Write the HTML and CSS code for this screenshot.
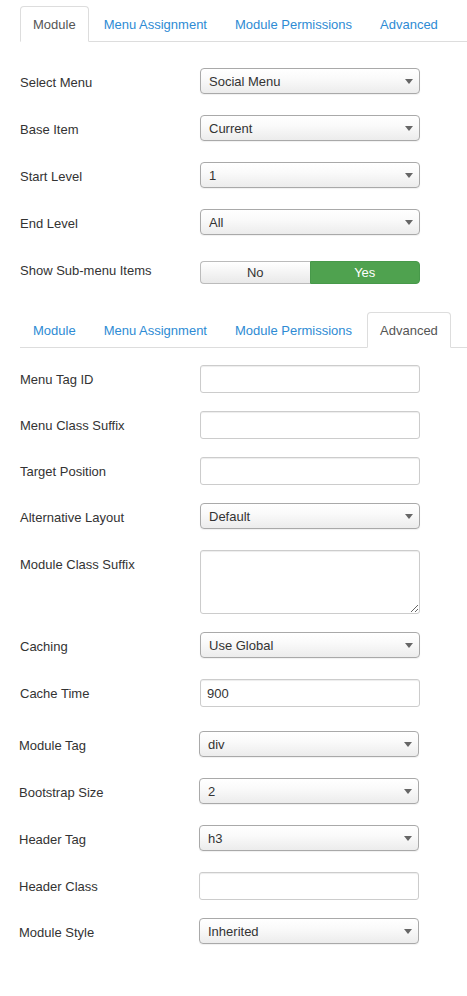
FILE: index.html
```html
<!DOCTYPE html>
<html>
<head>
<meta charset="utf-8">
<link rel="stylesheet" href="styles.css">
</head>
<body>
<div class="page">
  <ul class="tabs tabs-first">
    <li class="tab active"><a>Module</a></li>
    <li class="tab"><a>Menu Assignment</a></li>
    <li class="tab"><a>Module Permissions</a></li>
    <li class="tab"><a>Advanced</a></li>
  </ul>
  <div class="pane pane-first">
    <div class="row"><label class="lbl">Select Menu</label><div class="select"><select><option>Social Menu</option></select></div></div>
    <div class="row"><label class="lbl">Base Item</label><div class="select"><select><option>Current</option></select></div></div>
    <div class="row"><label class="lbl">Start Level</label><div class="select"><select><option>1</option></select></div></div>
    <div class="row"><label class="lbl">End Level</label><div class="select"><select><option>All</option></select></div></div>
    <div class="row"><label class="lbl">Show Sub-menu Items</label>
      <div class="toggle"><span class="tbtn no">No</span><span class="tbtn yes">Yes</span></div>
    </div>
  </div>

  <ul class="tabs tabs-second">
    <li class="tab"><a>Module</a></li>
    <li class="tab"><a>Menu Assignment</a></li>
    <li class="tab"><a>Module Permissions</a></li>
    <li class="tab active"><a>Advanced</a></li>
  </ul>
  <div class="pane pane-second">
    <div class="row"><label class="lbl">Menu Tag ID</label><input class="text" type="text" value=""></div>
    <div class="row"><label class="lbl">Menu Class Suffix</label><input class="text" type="text" value=""></div>
    <div class="row"><label class="lbl">Target Position</label><input class="text" type="text" value=""></div>
    <div class="row"><label class="lbl">Alternative Layout</label><div class="select"><select><option>Default</option></select></div></div>
    <div class="row"><label class="lbl">Module Class Suffix</label><textarea class="area"></textarea></div>
    <div class="row"><label class="lbl">Caching</label><div class="select"><select><option>Use Global</option></select></div></div>
    <div class="row"><label class="lbl">Cache Time</label><input class="text" type="text" value="900"></div>
    <div class="group">
      <div class="row"><label class="lbl">Module Tag</label><div class="select"><select><option>div</option></select></div></div>
      <div class="row"><label class="lbl">Bootstrap Size</label><div class="select"><select><option>2</option></select></div></div>
      <div class="row"><label class="lbl">Header Tag</label><div class="select"><select><option>h3</option></select></div></div>
      <div class="row"><label class="lbl">Header Class</label><input class="text" type="text" value=""></div>
      <div class="row"><label class="lbl">Module Style</label><div class="select"><select><option>Inherited</option></select></div></div>
    </div>
  </div>
</div>
</body>
</html>
```

FILE: styles.css
```css
* { box-sizing: border-box; }
html, body { margin: 0; padding: 0; background: #fff; }
body {
  font-family: "Liberation Sans", Arial, sans-serif;
  font-size: 13px;
  line-height: 18px;
  color: #333;
}
.page { padding-left: 20px; }

.tabs {
  list-style: none;
  margin: 0;
  padding: 0;
  display: flex;
  border-bottom: 1px solid #ddd;
}
.tabs-first { padding-top: 6px; }
.tabs-second { margin-top: 28px; }
.tab { margin-right: 2px; margin-bottom: -1px; }
.tab a {
  display: block;
  padding: 9px 12px 7px;
  line-height: 18px;
  border: 1px solid transparent;
  border-radius: 4px 4px 0 0;
  color: #2e8bd4;
}
.tab.active a {
  color: #555;
  background: #fff;
  border-color: #ddd #ddd transparent #ddd;
}

.pane-first { padding-top: 26px; }
.pane-second { padding-top: 17px; }

.row {
  display: flex;
  align-items: flex-start;
  margin-bottom: 18px;
}
.lbl {
  width: 180px;
  flex: none;
  padding-top: 6px;
  color: #333;
}
.group { padding-top: 6px; margin-left: -1px; }

.select {
  position: relative;
  width: 220px;
  height: 26px;
  margin-bottom: 3px;
}
.select select {
  appearance: none;
  -webkit-appearance: none;
  width: 100%;
  height: 26px;
  margin: 0;
  padding: 0 24px 0 8px;
  font-family: "Liberation Sans", Arial, sans-serif;
  font-size: 13px;
  color: #333;
  border: 1px solid #a9a9a9;
  border-radius: 4px;
  background: linear-gradient(#ffffff 0%, #fafafa 40%, #ececec 100%);
  box-shadow: 0 1px 1px rgba(0,0,0,0.06);
  outline: none;
}
.select::after {
  content: "";
  position: absolute;
  right: 7px;
  top: 11px;
  border-left: 4px solid transparent;
  border-right: 4px solid transparent;
  border-top: 5px solid #666;
  pointer-events: none;
}

.text {
  width: 220px;
  height: 28px;
  margin: 0;
  padding: 4px 6px;
  font-family: "Liberation Sans", Arial, sans-serif;
  font-size: 13px;
  color: #333;
  border: 1px solid #ccc;
  border-radius: 3px;
  box-shadow: inset 0 1px 1px rgba(0,0,0,0.075);
  outline: none;
}
.area {
  width: 220px;
  height: 64px;
  margin: 0;
  padding: 4px 6px;
  font-family: "Liberation Sans", Arial, sans-serif;
  font-size: 13px;
  border: 1px solid #ccc;
  border-radius: 3px;
  box-shadow: inset 0 1px 1px rgba(0,0,0,0.075);
  outline: none;
  resize: both;
}

.toggle {
  display: flex;
  width: 220px;
  height: 23px;
  margin-top: 5px;
}
.tbtn {
  flex: 1;
  text-align: center;
  line-height: 21px;
  font-size: 13px;
}
.tbtn.no {
  color: #333;
  border: 1px solid #bbb;
  border-right: none;
  border-radius: 4px 0 0 4px;
  background: linear-gradient(#ffffff, #e9e9e9);
}
.tbtn.yes {
  color: #fff;
  border: 1px solid #47994a;
  border-radius: 0 4px 4px 0;
  background: #4fa24f;
}
```
